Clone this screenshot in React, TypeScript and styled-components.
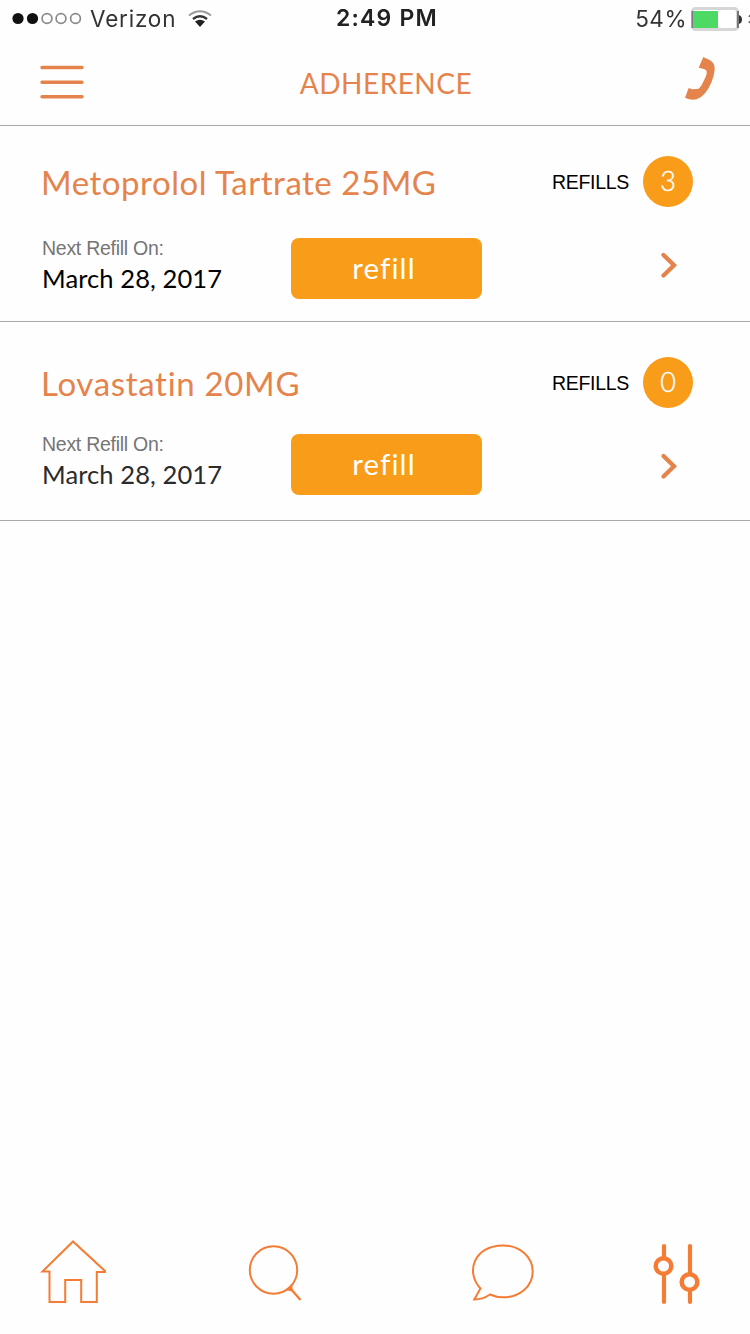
import React from "react";
import styled, { createGlobalStyle } from "styled-components";

const ORANGE = "#e4844c";
const AMBER = "#f89c19";
const TAB = "#f47c35";

const GlobalStyle = createGlobalStyle`
  * { box-sizing: border-box; }
  body { margin: 0; background: #fefefe; }
`;

const Screen = styled.div`
  display: flex;
  flex-direction: column;
  width: 750px;
  height: 1334px;
  overflow: hidden;
  background: #fefefe;
  font-family: Lato, "Liberation Sans", sans-serif;
`;

const StatusBar = styled.div`
  display: grid;
  grid-template-columns: 1fr auto 1fr;
  align-items: center;
  height: 37px;
  padding-left: 12px;
  color: #333;
  font: 22.5px/37px Inter, "Liberation Sans", sans-serif;
  filter: blur(0.7px);
`;

const StatusGroup = styled.div<{ $end?: boolean }>`
  display: flex;
  align-items: center;
  justify-content: ${(p) => (p.$end ? "flex-end" : "flex-start")};
`;

const Carrier = styled.span`
  margin: 0 12px 0 8px;
  letter-spacing: 0.8px;
`;

const Clock = styled.span`
  margin-left: 12px;
  font-size: 23px;
  font-weight: 600;
  letter-spacing: 1.2px;
  color: #222;
`;

const Percent = styled.span`
  margin-right: 4px;
  letter-spacing: 0.5px;
`;

const NavBar = styled.header`
  display: grid;
  grid-template-columns: 1fr auto 1fr;
  align-items: center;
  height: 89px;
  padding: 0 34px 0 40px;
  border-bottom: 1px solid #a9a9a9;
`;

const NavTitle = styled.h1`
  margin: 0;
  color: ${ORANGE};
  font-size: 28px;
  font-weight: 400;
  line-height: 34px;
  letter-spacing: 0.5px;
  padding: 3px 0 0 16px;
`;

const NavButton = styled.button<{ $end?: boolean }>`
  display: flex;
  justify-self: ${(p) => (p.$end ? "end" : "start")};
  padding: 0;
  border: 0;
  background: none;
`;

const Card = styled.section<{ $height: number }>`
  display: flex;
  justify-content: space-between;
  height: ${(p) => p.$height}px;
  padding: 0 57px 0 41px;
  border-bottom: 1px solid #a9a9a9;
`;

const Details = styled.div`
  display: flex;
  flex-direction: column;
`;

const DrugName = styled.h2<{ $offset: number; $spacing: number }>`
  height: 112px;
  margin: 0;
  padding-top: ${(p) => 36 + p.$offset}px;
  color: ${ORANGE};
  font-size: 33px;
  font-weight: 400;
  line-height: 40px;
  letter-spacing: ${(p) => p.$spacing}px;
  white-space: nowrap;
`;

const Schedule = styled.div`
  display: flex;
`;

const NextRefill = styled.div`
  width: 250px;
  margin-top: -1px;
  padding-left: 1px;
`;

const Caption = styled.div`
  color: #757575;
  font: 19.5px/22px "Liberation Sans", sans-serif;
  letter-spacing: -0.27px;
`;

const DateText = styled.div<{ $muted?: boolean }>`
  margin-top: 3px;
  color: ${(p) => (p.$muted ? "#2b2b2b" : "#000")};
  font-size: 25.5px;
  line-height: 32px;
  letter-spacing: 0.1px;
`;

const RefillButton = styled.button`
  width: 191px;
  height: 61px;
  padding: 0 5px 2px 0;
  border: 0;
  border-radius: 8px;
  background: ${AMBER};
  color: #fff;
  font: 400 29.5px/34px Lato, sans-serif;
  letter-spacing: 1.1px;
  font-variant-ligatures: none;
`;

const Side = styled.div<{ $offset: number }>`
  display: flex;
  flex-direction: column;
  align-items: flex-end;
  padding-top: ${(p) => 30 + p.$offset}px;
`;

const RefillCount = styled.div`
  display: flex;
  align-items: center;
`;

const CountLabel = styled.span`
  color: #000;
  font: 19.5px/22px "Liberation Sans", sans-serif;
  letter-spacing: -0.3px;
`;

const Badge = styled.span`
  width: 50px;
  height: 51px;
  margin-left: 14px;
  border-radius: 50%;
  background: ${AMBER};
  color: #fff;
  font-size: 27px;
  font-weight: 300;
  line-height: 50px;
  text-align: center;
  -webkit-text-stroke: 0.4px #fff;
`;

const Chevron = styled.svg`
  margin: 44px 14px 0 0;
`;

const TabBar = styled.nav`
  display: flex;
  height: 96px;
  margin-top: auto;
  padding-left: 40px;
`;

const TabIcon = styled.svg<{ $gap?: number }>`
  flex: none;
  margin-left: ${(p) => p.$gap ?? 0}px;
  fill: none;
  stroke: ${TAB};
  stroke-width: 2;
`;

const drugs = [
  { name: "Metoprolol Tartrate 25MG", refills: 3, date: "March 28, 2017", height: 196, offset: 0, spacing: 0.53 },
  { name: "Lovastatin 20MG", refills: 0, date: "March 28, 2017", height: 199, offset: 5, spacing: 0.68, muted: true },
];

export default function App() {
  return (
    <Screen>
      <GlobalStyle />
      <StatusBar>
        <StatusGroup>
          <svg width="70" height="14" viewBox="0 0 70 14">
            <circle cx="6" cy="6.500" r="5.600" fill="#111" />
            <circle cx="20.500" cy="6.500" r="5.600" fill="#111" />
            {[35, 49, 63.5].map((x) => (
              <circle key={x} cx={x} cy="6.500" r="4.900" fill="none" stroke="#8a8a8a" strokeWidth="1.700" />
            ))}
          </svg>
          <Carrier>Verizon</Carrier>
          <svg width="24" height="18" viewBox="0 0 24 18" fill="none">
            <path d="M1 5.500Q12-3 23 5.500" stroke="#999" strokeWidth="2" />
            <path d="M5 9Q12 3.500 19 9" stroke="#333" strokeWidth="2.500" />
            <path d="M7 11.500Q12 8 17 11.500L12 17Z" fill="#222" />
          </svg>
        </StatusGroup>
        <Clock>2:49 PM</Clock>
        <StatusGroup $end>
          <Percent>54%</Percent>
          <svg width="59" height="24" viewBox="0 0 59 24">
            <rect x="1.500" y="1.500" width="45" height="21" rx="3" fill="#fff" stroke="#d6d6d6" strokeWidth="3" />
            <path d="M1.500 4V21" stroke="#85708a" strokeWidth="2" />
            <rect x="2.500" y="4" width="24.500" height="17" fill="#4cd964" />
            <path d="M47 4V21" stroke="#777" strokeWidth="2" />
            <path d="M48 8Q51 9 51 12.500T48 17Z" fill="#333" />
            <path d="M59 8l-1 2M59 14l-1 2" stroke="#666" strokeWidth="1.500" />
          </svg>
        </StatusGroup>
      </StatusBar>

      <NavBar>
        <NavButton aria-label="Menu">
          <svg width="44" height="36" viewBox="0 0 44 36">
            <path d="M2 4.500H42M2 19.200H42M2 33.800H42" stroke={ORANGE} strokeWidth="3.400" strokeLinecap="round" />
          </svg>
        </NavButton>
        <NavTitle>ADHERENCE</NavTitle>
        <NavButton $end aria-label="Call">
          <svg width="32" height="50" viewBox="0 0 32 50">
            <path
              d="M19.300 1L26.500 4.500Q31 7.500 30.700 13Q30.300 19.500 27.700 25.700Q25 32.500 21 37.300Q17 42 12.700 43.300Q7 44.500 1 41.700L4.700 32L8.300 33.300L14.700 32.700Q17.500 30 19.300 25.700Q22 21 22.700 17.500Q23 15.500 22 14L19 12.700L14.700 11.700Z"
              fill={ORANGE}
            />
          </svg>
        </NavButton>
      </NavBar>

      {drugs.map((d) => (
        <Card key={d.name} $height={d.height}>
          <Details>
            <DrugName $offset={d.offset} $spacing={d.spacing}>{d.name}</DrugName>
            <Schedule>
              <NextRefill>
                <Caption>Next Refill On:</Caption>
                <DateText $muted={d.muted}>{d.date}</DateText>
              </NextRefill>
              <RefillButton>refill</RefillButton>
            </Schedule>
          </Details>
          <Side $offset={d.offset}>
            <RefillCount>
              <CountLabel>REFILLS</CountLabel>
              <Badge>{d.refills}</Badge>
            </RefillCount>
            <Chevron width="20" height="28" viewBox="0 0 20 28">
              <path d="M4.500 4L15 14.200L4.500 24.500" fill="none" stroke={ORANGE} strokeWidth="4.300" strokeLinecap="round" />
            </Chevron>
          </Side>
        </Card>
      ))}

      <TabBar>
        <TabIcon width="68" height="70" viewBox="0 0 68 70">
          <path d="M33 3.500L2.500 33.500H9.500V64H25.200V42H41.200V64H56.800V34H65V33Z" />
        </TabIcon>
        <TabIcon $gap={138} width="56" height="70" viewBox="0 0 56 70">
          <circle cx="27.500" cy="32" r="23.700" />
          <path d="M40 51.500Q44 50 46 46.500L46 53Z" fill={TAB} strokeWidth="1" />
          <path d="M44.500 50.500L54.500 62" strokeWidth="2.300" />
        </TabIcon>
        <TabIcon $gap={168} width="66" height="70" viewBox="0 0 66 70">
          <path d="M10.500 50.500C-5 34 4 7.500 33 7.500C49 7.500 62.700 18 62.700 33.500C62.700 49 49 59.300 33 59.300Q26 59.300 20 56.500Q12.500 61.500 4.300 61.500Z" />
        </TabIcon>
        <TabIcon $gap={114} width="50" height="70" viewBox="0 0 50 70">
          <path d="M14 8V20M14 37V64M40 8V36M40 53V64" strokeWidth="4.200" strokeLinecap="round" />
          <circle cx="13.500" cy="28" r="7.800" strokeWidth="4.500" />
          <circle cx="39.500" cy="44" r="7.800" strokeWidth="4.500" />
        </TabIcon>
      </TabBar>
    </Screen>
  );
}
